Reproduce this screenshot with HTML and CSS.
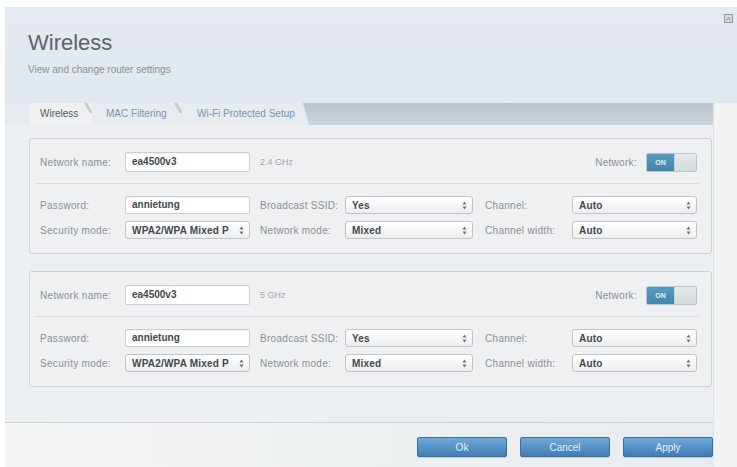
FILE: index.html
```html
<!DOCTYPE html>
<html>
<head>
<meta charset="utf-8">
<link rel="stylesheet" href="styles.css">
</head>
<body>
<div class="dialog">
  <div class="header">
    <h1 class="title">Wireless</h1>
    <p class="subtitle">View and change router settings</p>
    <span class="close"><svg width="9" height="9" viewBox="0 0 9 9"><rect x="0.5" y="0.5" width="8" height="8" fill="#d9dde1" stroke="#8f959b"/><path d="M2.5 6.5 L4.5 3.5 L6.5 6.5" fill="none" stroke="#7d848a" stroke-width="1"/></svg></span>
  </div>
  <div class="body">
    <div class="main">
      <div class="tabs">
        <div class="tab active">Wireless</div>
        <div class="tab">MAC Filtering</div>
        <div class="tab last">Wi-Fi Protected Setup</div>
        <div class="tab-fill"></div>
      </div>
      <div class="content">
        <div class="section">
          <div class="row-top">
            <span class="label w1">Network name:</span>
            <div class="input tall">ea4500v3</div>
            <span class="freq">2.4 GHz</span>
            <span class="spacer"></span>
            <span class="label net">Network:</span>
            <div class="toggle"><span class="on">ON</span><span class="off"></span></div>
          </div>
          <div class="divider"></div>
          <div class="grid">
            <span class="label">Password:</span>
            <div class="input">annietung</div>
            <span class="label c2">Broadcast SSID:</span>
            <div class="select"><span>Yes</span><svg width="5" height="9" viewBox="0 0 5 9"><path d="M2.5 0.5 L4.5 3.5 H0.5Z M2.5 8.5 L4.5 5.5 H0.5Z" fill="#6b7075"/></svg></div>
            <span class="label c3">Channel:</span>
            <div class="select"><span>Auto</span><svg width="5" height="9" viewBox="0 0 5 9"><path d="M2.5 0.5 L4.5 3.5 H0.5Z M2.5 8.5 L4.5 5.5 H0.5Z" fill="#6b7075"/></svg></div>
            <span class="label">Security mode:</span>
            <div class="select"><span>WPA2/WPA Mixed P</span><svg width="5" height="9" viewBox="0 0 5 9"><path d="M2.5 0.5 L4.5 3.5 H0.5Z M2.5 8.5 L4.5 5.5 H0.5Z" fill="#6b7075"/></svg></div>
            <span class="label c2">Network mode:</span>
            <div class="select"><span>Mixed</span><svg width="5" height="9" viewBox="0 0 5 9"><path d="M2.5 0.5 L4.5 3.5 H0.5Z M2.5 8.5 L4.5 5.5 H0.5Z" fill="#6b7075"/></svg></div>
            <span class="label c3">Channel width:</span>
            <div class="select"><span>Auto</span><svg width="5" height="9" viewBox="0 0 5 9"><path d="M2.5 0.5 L4.5 3.5 H0.5Z M2.5 8.5 L4.5 5.5 H0.5Z" fill="#6b7075"/></svg></div>
          </div>
        </div>
        <div class="section">
          <div class="row-top">
            <span class="label w1">Network name:</span>
            <div class="input tall">ea4500v3</div>
            <span class="freq">5 GHz</span>
            <span class="spacer"></span>
            <span class="label net">Network:</span>
            <div class="toggle"><span class="on">ON</span><span class="off"></span></div>
          </div>
          <div class="divider"></div>
          <div class="grid">
            <span class="label">Password:</span>
            <div class="input">annietung</div>
            <span class="label c2">Broadcast SSID:</span>
            <div class="select"><span>Yes</span><svg width="5" height="9" viewBox="0 0 5 9"><path d="M2.5 0.5 L4.5 3.5 H0.5Z M2.5 8.5 L4.5 5.5 H0.5Z" fill="#6b7075"/></svg></div>
            <span class="label c3">Channel:</span>
            <div class="select"><span>Auto</span><svg width="5" height="9" viewBox="0 0 5 9"><path d="M2.5 0.5 L4.5 3.5 H0.5Z M2.5 8.5 L4.5 5.5 H0.5Z" fill="#6b7075"/></svg></div>
            <span class="label">Security mode:</span>
            <div class="select"><span>WPA2/WPA Mixed P</span><svg width="5" height="9" viewBox="0 0 5 9"><path d="M2.5 0.5 L4.5 3.5 H0.5Z M2.5 8.5 L4.5 5.5 H0.5Z" fill="#6b7075"/></svg></div>
            <span class="label c2">Network mode:</span>
            <div class="select"><span>Mixed</span><svg width="5" height="9" viewBox="0 0 5 9"><path d="M2.5 0.5 L4.5 3.5 H0.5Z M2.5 8.5 L4.5 5.5 H0.5Z" fill="#6b7075"/></svg></div>
            <span class="label c3">Channel width:</span>
            <div class="select"><span>Auto</span><svg width="5" height="9" viewBox="0 0 5 9"><path d="M2.5 0.5 L4.5 3.5 H0.5Z M2.5 8.5 L4.5 5.5 H0.5Z" fill="#6b7075"/></svg></div>
          </div>
        </div>
      </div>
      <div class="footer">
        <button class="btn">Ok</button>
        <button class="btn">Cancel</button>
        <button class="btn">Apply</button>
      </div>
    </div>
    <div class="rail"></div>
  </div>
</div>
</body>
</html>
```
FILE: styles.css
```css
html, body {
  margin: 0;
  padding: 0;
  background: #ffffff;
  font-family: "Liberation Sans", Arial, sans-serif;
  height: 100%;
  overflow: hidden;
}
.dialog {
  margin: 7px 0 0 5px;
  background: #edf0f1;
  min-height: 470px;
  display: flex;
  flex-direction: column;
}
.header {
  position: relative;
  height: 96px;
  box-sizing: border-box;
  padding: 23px 0 0 23px;
  background: linear-gradient(#e5eaf0, #e1e8ef);
}
.title {
  margin: 0;
  font-size: 22px;
  line-height: 25px;
  font-weight: normal;
  color: #5c646d;
}
.subtitle {
  margin: 9px 0 0 0;
  font-size: 10px;
  line-height: 12px;
  color: #8a9198;
}
.close {
  position: absolute;
  top: 7px;
  right: 4px;
  line-height: 0;
}
.body {
  display: flex;
  flex: 1;
}
.main {
  width: 708px;
  display: flex;
  flex-direction: column;
}
.rail {
  flex: 1;
  background: #f2f4f4;
  border-left: 1px solid #dde2e5;
}
.tabs {
  display: flex;
  height: 22px;
  padding-left: 25px;
  background: #e6eaee;
}
.tab {
  position: relative;
  font-size: 10px;
  line-height: 22px;
  color: #7495b4;
  background: #e8ecef;
  padding: 0 0 0 14px;
  width: 90px;
  box-sizing: border-box;
  white-space: nowrap;
}
.tab.active {
  width: 62px;
  padding-left: 10px;
  color: #555b61;
  background: #eef0f2;
}
.tab.last {
  width: 123px;
  padding-left: 15px;
}
.tab::after {
  content: "";
  position: absolute;
  right: 2px;
  top: 0;
  width: 3px;
  height: 10px;
  background: #c4cad0;
  transform: skewX(30deg);
}
.tab.last::after {
  display: none;
}
.tab-fill {
  flex: 1;
  background: linear-gradient(#bcc4cd, #cdd5d9);
  clip-path: polygon(0 0, 100% 0, 100% 100%, 6px 100%);
  margin-left: -2px;
}
.content {
  flex: 1;
  padding: 13px 0 32px 24px;
  display: flex;
  flex-direction: column;
  gap: 17px;
  background: #eceff1;
}
.section {
  width: 683px;
  box-sizing: border-box;
  border: 1px solid #cdd2d6;
  border-radius: 3px;
  background: #eef0f1;
  padding: 13px 14px 14px 10px;
}
.row-top {
  display: flex;
  align-items: center;
  height: 20px;
}
.label {
  font-size: 10px;
  color: #8b9096;
  letter-spacing: 0.3px;
  white-space: nowrap;
}
.w1 {
  width: 85px;
}
.freq {
  margin-left: 10px;
  font-size: 9px;
  color: #a1a6ab;
}
.spacer {
  flex: 1;
}
.net {
  margin-right: 9px;
}
.divider {
  height: 1px;
  background: #d6dadd;
  margin: 11px -2px 12px -4px;
}
.grid {
  display: grid;
  grid-template-columns: 85px 125px 95px 128px 99px 125px;
  grid-template-rows: 18px 18px;
  row-gap: 7px;
  align-items: center;
}
.c2 {
  padding-left: 10px;
}
.c3 {
  padding-left: 12px;
}
.input {
  box-sizing: border-box;
  height: 18px;
  border: 1px solid #c9ced2;
  border-radius: 2px;
  background: #ffffff;
  box-shadow: inset 0 1px 1px rgba(0,0,0,0.06);
  padding-left: 6px;
  font-size: 10px;
  font-weight: bold;
  line-height: 16px;
  color: #43484c;
}
.input.tall {
  width: 125px;
  height: 20px;
  line-height: 18px;
}
.select {
  box-sizing: border-box;
  height: 18px;
  border: 1px solid #bfc5ca;
  border-radius: 3px;
  background: linear-gradient(#ffffff, #eceeef);
  padding: 0 5px 0 6px;
  display: flex;
  align-items: center;
  justify-content: space-between;
  font-size: 10px;
  font-weight: bold;
  color: #43484c;
  letter-spacing: 0.2px;
  overflow: hidden;
  white-space: nowrap;
}
.toggle {
  display: flex;
  width: 51px;
  height: 19px;
  box-sizing: border-box;
  border: 1px solid #b9c6cb;
  border-radius: 2px;
  overflow: hidden;
}
.on {
  width: 27px;
  background: linear-gradient(#5a9bc0, #4285ad);
  color: #e6f0f6;
  font-size: 7px;
  font-weight: bold;
  line-height: 17px;
  text-align: center;
}
.off {
  flex: 1;
  background: linear-gradient(#e3e9e8, #d3dcdb);
  border-left: 1px solid #c7d1d2;
}
.footer {
  border-top: 1px solid #cbd1d6;
  padding: 14px 0 20px 0;
  display: flex;
  justify-content: flex-end;
  gap: 13px;
  background: linear-gradient(to right, #f4f6f6, #e8ecee);
}
.btn {
  width: 90px;
  height: 20px;
  border: 1px solid #3b6f9c;
  border-radius: 2px;
  background: linear-gradient(#72aad9, #3f7db5);
  color: #e4eef8;
  font-family: "Liberation Sans", Arial, sans-serif;
  font-size: 10px;
  padding: 0;
  box-shadow: 0 1px 1px rgba(0,0,0,0.15);
}
```
